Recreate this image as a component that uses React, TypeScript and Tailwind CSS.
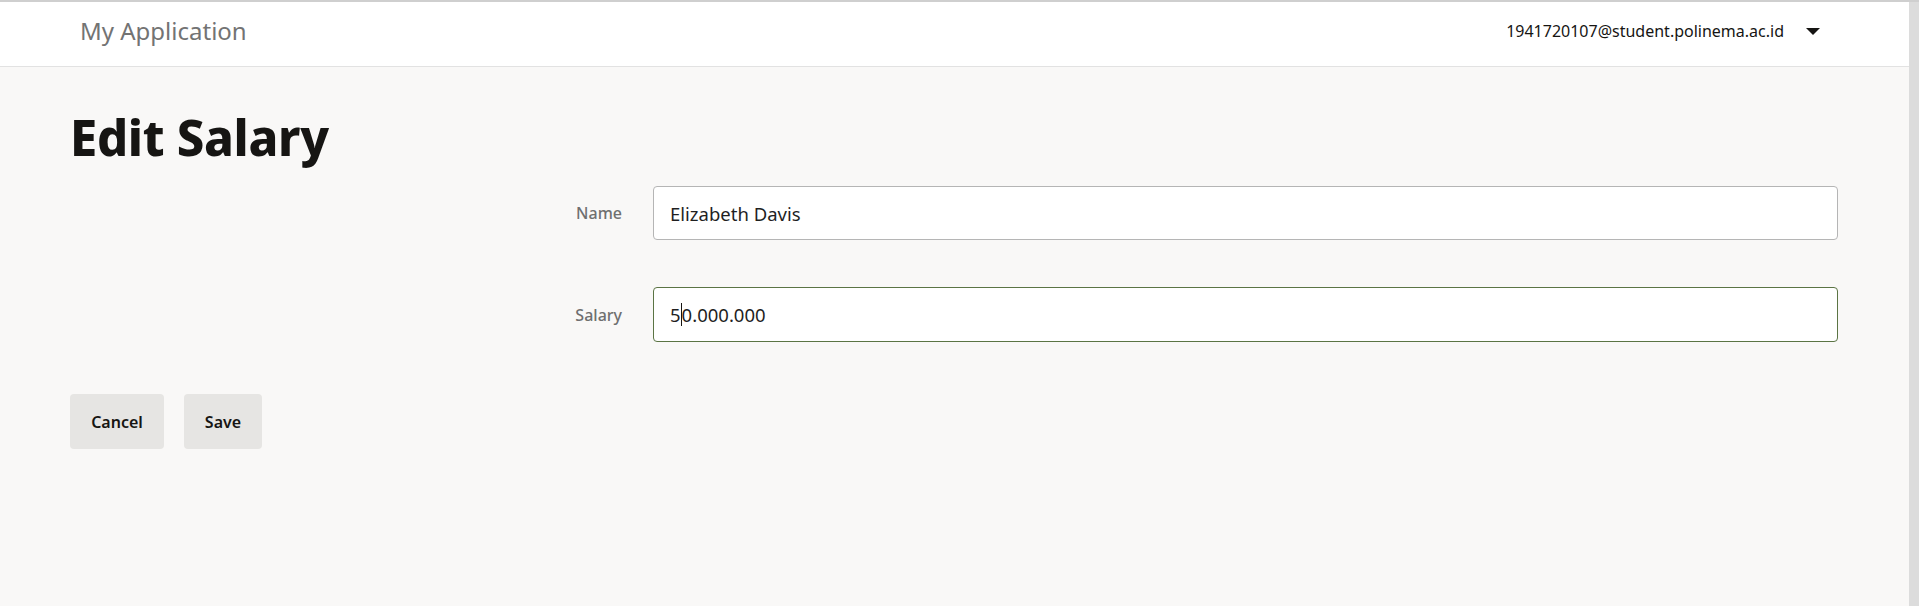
import { useState } from "react";

const font = { fontFamily: '"Noto Sans", "Open Sans", sans-serif' };

function Navbar() {
    return (
        <header className="h-[67px] bg-white border-t-2 border-[#cfcfcf] border-b border-b-[#e2e2e2] flex items-center justify-between pl-[80px] pr-[89px]">
            <a href="#" className="text-[24px] text-[#737373] leading-none -mt-[6px]">My Application</a>
            <button className="flex items-center gap-[22px] text-[16px] text-[#161513] -mt-[6px]">
                <span>1941720107@student.polinema.ac.id</span>
                <svg width="14" height="7" viewBox="0 0 14 7"><path d="M0 0h14L7 7z" fill="#161513" /></svg>
            </button>
        </header>
    );
}

function FormRow({ label, children }: { label: string; children: React.ReactNode }) {
    return (
        <div className="flex items-center">
            <label className="w-[122px] pr-[31px] text-right text-[16px] font-medium text-[#6f6f6f]">{label}</label>
            <div className="flex-1">{children}</div>
        </div>
    );
}

export default function App() {
    const [name, setName] = useState("Elizabeth Davis");

    return (
        <div className="min-h-[606px] flex bg-[#f9f8f7]" style={font}>
            <div className="flex-1 flex flex-col">
                <Navbar />
                <main className="pl-[70px] pr-[71px]">
                    <h1 className="mt-[40px] text-[49px] font-extrabold text-[#161513] leading-[60px] tracking-[-0.3px]">Edit Salary</h1>
                    <form className="ml-[461px] mt-[19px] flex flex-col gap-[47px]">
                        <FormRow label="Name">
                            <input value={name} onChange={(e) => setName(e.target.value)} className="w-full h-[54px] bg-white border border-[#b5b5b5] rounded-[4px] px-[16px] text-[18.5px] text-[#1f1f1f] outline-none" />
                        </FormRow>
                        <FormRow label="Salary">
                            <div role="textbox" className="w-full h-[55px] bg-white border border-[#5b7444] rounded-[4px] px-[16px] text-[18.5px] text-[#1f1f1f] flex items-center">
                                <span>5</span>
                                <span className="inline-block w-px h-[23px] bg-[#161513]"></span>
                                <span>0.000.000</span>
                            </div>
                        </FormRow>
                    </form>
                    <div className="mt-[52px] flex gap-[20px]">
                        <button className="h-[55px] w-[94px] rounded-[4px] bg-[#e6e5e3] text-[16px] font-semibold text-[#161513]">Cancel</button>
                        <button className="h-[55px] w-[78px] rounded-[4px] bg-[#e6e5e3] text-[16px] font-semibold text-[#161513]">Save</button>
                    </div>
                </main>
            </div>
            <div className="w-[10px] bg-[#dcdcdc] border-t-2 border-[#cfcfcf]"></div>
        </div>
    );
}
